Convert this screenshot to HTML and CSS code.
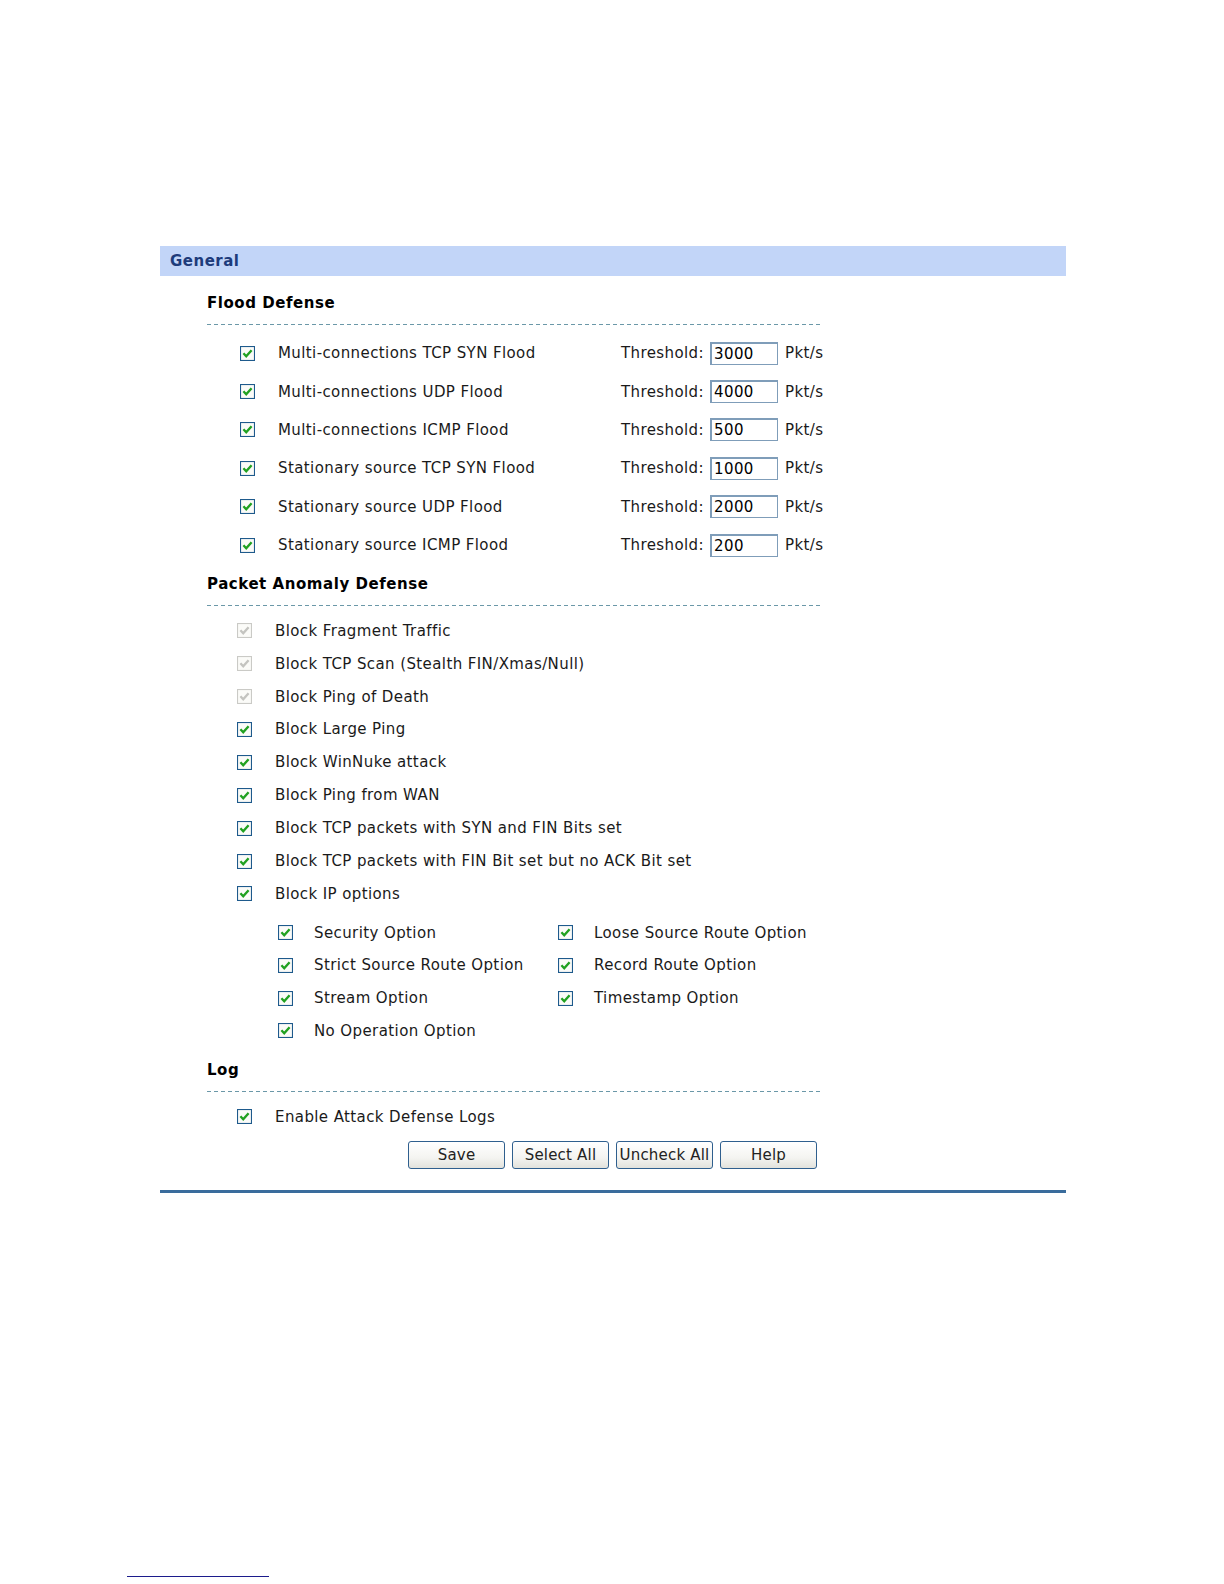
FILE: index.html
```html
<!DOCTYPE html>
<html lang="en">
<head>
    <meta charset="UTF-8">
    <title>Attack Defense - General</title>
    <link rel="stylesheet" href="styles.css">
</head>
<body>

<svg width="0" height="0" class="defs">
    <symbol id="chk" viewBox="0 0 14 14">
        <rect x="0.5" y="0.5" width="13" height="13" class="chk-box"/>
        <path d="M3.2 6.8 L5.8 9.6 L10.8 3.9" class="chk-mark"/>
    </symbol>
</svg>

<div class="panel">
    <div class="panel-head">General</div>
    <div class="panel-body">

        <div class="section-title">Flood Defense</div>
        <div class="flood-list">
            <div class="flood-row">
                <svg class="chk"><use href="#chk"/></svg>
                <span class="flood-label">Multi-connections TCP SYN Flood</span>
                <span class="thr-label">Threshold:</span>
                <input class="thr-input" type="text" value="3000">
                <span>Pkt/s</span>
            </div>
            <div class="flood-row">
                <svg class="chk"><use href="#chk"/></svg>
                <span class="flood-label">Multi-connections UDP Flood</span>
                <span class="thr-label">Threshold:</span>
                <input class="thr-input" type="text" value="4000">
                <span>Pkt/s</span>
            </div>
            <div class="flood-row">
                <svg class="chk"><use href="#chk"/></svg>
                <span class="flood-label">Multi-connections ICMP Flood</span>
                <span class="thr-label">Threshold:</span>
                <input class="thr-input" type="text" value="500">
                <span>Pkt/s</span>
            </div>
            <div class="flood-row">
                <svg class="chk"><use href="#chk"/></svg>
                <span class="flood-label">Stationary source TCP SYN Flood</span>
                <span class="thr-label">Threshold:</span>
                <input class="thr-input" type="text" value="1000">
                <span>Pkt/s</span>
            </div>
            <div class="flood-row">
                <svg class="chk"><use href="#chk"/></svg>
                <span class="flood-label">Stationary source UDP Flood</span>
                <span class="thr-label">Threshold:</span>
                <input class="thr-input" type="text" value="2000">
                <span>Pkt/s</span>
            </div>
            <div class="flood-row">
                <svg class="chk"><use href="#chk"/></svg>
                <span class="flood-label">Stationary source ICMP Flood</span>
                <span class="thr-label">Threshold:</span>
                <input class="thr-input" type="text" value="200">
                <span>Pkt/s</span>
            </div>
        </div>

        <div class="section-title anomaly-title">Packet Anomaly Defense</div>
        <div class="check-list">
            <div class="check-row disabled"><svg class="chk"><use href="#chk"/></svg>Block Fragment Traffic</div>
            <div class="check-row disabled"><svg class="chk"><use href="#chk"/></svg>Block TCP Scan (Stealth FIN/Xmas/Null)</div>
            <div class="check-row disabled"><svg class="chk"><use href="#chk"/></svg>Block Ping of Death</div>
            <div class="check-row"><svg class="chk"><use href="#chk"/></svg>Block Large Ping</div>
            <div class="check-row"><svg class="chk"><use href="#chk"/></svg>Block WinNuke attack</div>
            <div class="check-row"><svg class="chk"><use href="#chk"/></svg>Block Ping from WAN</div>
            <div class="check-row"><svg class="chk"><use href="#chk"/></svg>Block TCP packets with SYN and FIN Bits set</div>
            <div class="check-row"><svg class="chk"><use href="#chk"/></svg>Block TCP packets with FIN Bit set but no ACK Bit set</div>
            <div class="check-row"><svg class="chk"><use href="#chk"/></svg>Block IP options</div>
        </div>
        <div class="ip-options">
            <div class="sub-row"><svg class="chk"><use href="#chk"/></svg>Security Option</div>
            <div class="sub-row"><svg class="chk"><use href="#chk"/></svg>Loose Source Route Option</div>
            <div class="sub-row"><svg class="chk"><use href="#chk"/></svg>Strict Source Route Option</div>
            <div class="sub-row"><svg class="chk"><use href="#chk"/></svg>Record Route Option</div>
            <div class="sub-row"><svg class="chk"><use href="#chk"/></svg>Stream Option</div>
            <div class="sub-row"><svg class="chk"><use href="#chk"/></svg>Timestamp Option</div>
            <div class="sub-row"><svg class="chk"><use href="#chk"/></svg>No Operation Option</div>
        </div>

        <div class="section-title log-title">Log</div>
        <div class="check-list">
            <div class="check-row"><svg class="chk"><use href="#chk"/></svg>Enable Attack Defense Logs</div>
        </div>

        <div class="buttons">
            <button type="button">Save</button>
            <button type="button">Select All</button>
            <button type="button">Uncheck All</button>
            <button type="button">Help</button>
        </div>
    </div>
</div>

<div class="footnote-rule"></div>

</body>
</html>
```

FILE: styles.css
```css
body {
    margin: 0;
    background-color: #fff;
    color: #1a1a1a;
    font-family: "DejaVu Sans", Verdana, sans-serif;
    font-size: 15px;
    letter-spacing: 0.4px;
}

.defs {
    position: absolute;
}

.panel {
    margin: 246px 0 0 160px;
    width: 906px;
    border-bottom: 3px solid #3a6c9c;
}

.panel-head {
    height: 30px;
    line-height: 30px;
    padding-left: 10px;
    background-color: #c2d5f8;
    color: #1d3b7b;
    font-weight: bold;
    font-size: 15px;
    letter-spacing: 0.5px;
}

.panel-body {
    padding: 0 0 21px 47px;
}

.section-title {
    width: 616px;
    margin-top: 17px;
    line-height: 20px;
    padding-bottom: 12px;
    font-weight: bold;
    font-size: 15px;
    letter-spacing: 0.55px;
    color: #000;
    background-image: linear-gradient(to right, #6b98a8 4px, transparent 4px);
    background-size: 7px 1px;
    background-repeat: repeat-x;
    background-position: left bottom;
}

.anomaly-title {
    margin-top: 10px;
}

.log-title {
    margin-top: 13px;
}

.flood-list {
    padding-top: 9px;
}

.flood-row {
    display: flex;
    align-items: center;
    height: 38.4px;
    padding-left: 33px;
}

.flood-row .chk {
    margin-right: 23px;
}

.flood-label {
    width: 343px;
}

.thr-label {
    width: 90px;
}

.thr-input {
    box-sizing: border-box;
    width: 68px;
    height: 23px;
    margin: 0 7px 0 -1px;
    padding: 0 2px;
    border: 1px solid #7f9db9;
    border-width: 2px 1px 1px 2px;
    font-family: inherit;
    font-size: 15px;
    letter-spacing: 0.4px;
    color: #000;
}

.chk {
    --box: #1e5a8c;
    --mark: #21a121;
    width: 15px;
    height: 15px;
    flex: none;
}

.disabled .chk {
    --box: #cacac6;
    --mark: #c4c4c0;
}

.chk-box {
    fill: #fbfbf8;
    stroke: var(--box);
    stroke-width: 1;
}

.chk-mark {
    fill: none;
    stroke: var(--mark);
    stroke-width: 2.2;
}

.check-list {
    padding-top: 8px;
}

.check-row {
    display: flex;
    align-items: center;
    height: 32.9px;
    padding-left: 30px;
}

.check-row .chk {
    margin-right: 23px;
}

.ip-options {
    display: grid;
    grid-template-columns: 280px auto;
    padding: 6px 0 0 71px;
}

.sub-row {
    display: flex;
    align-items: center;
    height: 32.7px;
}

.sub-row .chk {
    margin-right: 21px;
}

.buttons {
    display: flex;
    justify-content: center;
    gap: 7px;
    margin: 8px 0 0 -48px;
}

.buttons button {
    width: 97px;
    height: 28px;
    padding: 0;
    border: 1px solid #2f5f8e;
    border-radius: 3px;
    background: linear-gradient(#ffffff, #f4f4f1 60%, #e2e2dc);
    font-family: inherit;
    font-size: 15px;
    letter-spacing: 0.2px;
    color: #222;
}

.footnote-rule {
    width: 142px;
    margin: 383px 0 0 127px;
    border-top: 1px solid #1c1c8c;
}
```
